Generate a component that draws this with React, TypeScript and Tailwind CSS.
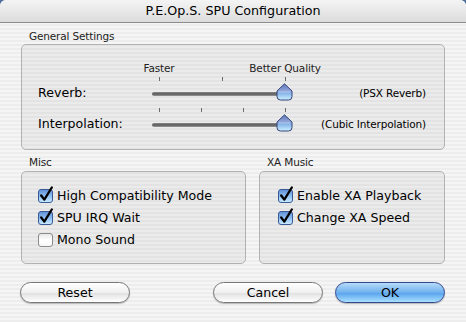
const STRIPES =
  "bg-[repeating-linear-gradient(0deg,#ededed_0px,#ededed_2px,#f5f5f5_2px,#f5f5f5_4px)]";

function Thumb() {
  return (
    <svg width="17" height="18" viewBox="0 0 17 18" className="absolute left-[124px] top-[6px]">
      <defs>
        <linearGradient id="tg" x1="0" y1="0" x2="0" y2="1">
          <stop offset="0" stopColor="#5f77b8" />
          <stop offset="0.5" stopColor="#97acdf" />
          <stop offset="0.55" stopColor="#7fb0e6" />
          <stop offset="1" stopColor="#cdf0ff" />
        </linearGradient>
      </defs>
      <path
        d="M8.5 0.8 L16 8 V13.5 Q16 17 12.5 17 H4.5 Q1 17 1 13.5 V8 Z"
        fill="url(#tg)"
        stroke="#34457a"
        strokeWidth="1"
      />
      <path d="M3 9 H14" stroke="#ffffff" strokeOpacity="0.35" />
    </svg>
  );
}

function Slider({ ticks }: { ticks: number[] }) {
  return (
    <div className="relative h-[24px] w-[142px]">
      {ticks.map((t) => (
        <span key={t} className="absolute top-0 h-[4px] w-px bg-[#6b6b6b]" style={{ left: t }} />
      ))}
      <div className="absolute left-0 top-[15px] h-[4px] w-[136px] rounded-full bg-[linear-gradient(#8a8a8a,#5a5a5a_50%,#9a9a9a)]" />
      <Thumb />
    </div>
  );
}

function Checkbox({ label, checked }: { label: string; checked?: boolean }) {
  return (
    <div className="flex h-[22px] items-center">
      <svg width="17" height="17" viewBox="0 0 17 17" className="-mt-[3px] mr-[2px]">
        <defs>
          <linearGradient id="cb" x1="0" y1="0" x2="0" y2="1">
            <stop offset="0" stopColor="#5f8fd6" />
            <stop offset="0.5" stopColor="#8dbdf2" />
            <stop offset="1" stopColor="#cdeeff" />
          </linearGradient>
          <linearGradient id="cw" x1="0" y1="0" x2="0" y2="1">
            <stop offset="0" stopColor="#e6e6e6" />
            <stop offset="0.5" stopColor="#ffffff" />
            <stop offset="1" stopColor="#f6f6f6" />
          </linearGradient>
        </defs>
        <rect
          x="0.5"
          y="3.5"
          width="14"
          height="13"
          rx="2.5"
          fill={checked ? "url(#cb)" : "url(#cw)"}
          stroke={checked ? "#3a5a96" : "#8a8a8a"}
        />
        {checked && (
          <path
            d="M3.2 9.5 L6.3 13.6 L13.8 1.5"
            fill="none"
            stroke="#000"
            strokeWidth="2.3"
            strokeLinecap="round"
            strokeLinejoin="round"
          />
        )}
      </svg>
      <span className="text-[12.6px] leading-[16px] text-black">{label}</span>
    </div>
  );
}

function AquaButton({ label, primary }: { label: string; primary?: boolean }) {
  return (
    <button
      type="button"
      className={`h-[21px] w-[110px] rounded-full border text-[12.6px] leading-[19px] text-black shadow-[0_1px_1px_rgba(0,0,0,0.25)] ${
        primary
          ? "border-[#34488f] bg-[linear-gradient(#b6dcfa,#6fb0ee_50%,#5ba6ef_55%,#a9e0ff)]"
          : "border-[#777777] bg-[linear-gradient(#ffffff,#f0f0f0_50%,#e2e2e2_55%,#ffffff)]"
      }`}
    >
      {label}
    </button>
  );
}

function GroupLabel({ children }: { children: string }) {
  return (
    <div className="ml-[8px] h-[13px] text-[10.5px] leading-[13px] tracking-[-0.15px] text-[#222]">
      {children}
    </div>
  );
}

export default function App() {
  return (
    <div className="h-[322px] w-[466px] bg-[#4f6f9c]" style={{ fontFamily: '"DejaVu Sans", sans-serif' }}>
      <div className={`flex h-full w-full flex-col overflow-hidden rounded-t-[6px] ${STRIPES}`}>
        <div className="flex h-[23px] shrink-0 items-center justify-center border-b border-[#8c8c8c] bg-[linear-gradient(#f4f4f4,#dcdcdc)] text-[12.7px] text-black">
          P.E.Op.S. SPU Configuration
        </div>

        <div className="flex flex-col px-[21px]">
          <div className="mt-[7px]">
            <GroupLabel>General Settings</GroupLabel>
          </div>
          <div className="mt-[1px] h-[106px] rounded-[5px] border border-[#b2b2b2] bg-black/[0.04] pl-[16px] pr-[18px] pt-[17px]">
            <div className="flex">
              <div className="w-[114px]" />
              <div className="relative h-[13px] w-[142px] text-[10.5px] leading-[13px] tracking-[-0.15px] text-[#222]">
                <span className="absolute left-[7px] -translate-x-1/2">Faster</span>
                <span className="absolute left-[133px] -translate-x-1/2 whitespace-nowrap">Better Quality</span>
              </div>
            </div>
            <div className="mt-[2px] flex items-start">
              <div className="mt-[8px] w-[114px] text-[12.6px] leading-[16px]">Reverb:</div>
              <Slider ticks={[7, 70, 133]} />
              <div className="mt-[8px] flex-1 text-right text-[10.5px] leading-[16px] tracking-[-0.15px]">
                (PSX Reverb)
              </div>
            </div>
            <div className="mt-[7px] flex items-start">
              <div className="mt-[8px] w-[114px] text-[12.6px] leading-[16px]">Interpolation:</div>
              <Slider ticks={[7, 49, 91, 133]} />
              <div className="mt-[8px] flex-1 text-right text-[10.5px] leading-[16px] tracking-[-0.15px]">
                (Cubic Interpolation)
              </div>
            </div>
          </div>

          <div className="mt-[6px] flex gap-[13px]">
            <div className="flex w-[225px] flex-col">
              <GroupLabel>Misc</GroupLabel>
              <div className="mt-[2px] h-[93px] rounded-[5px] border border-[#b2b2b2] bg-black/[0.04] pl-[16px] pt-[13px]">
                <Checkbox label="High Compatibility Mode" checked />
                <Checkbox label="SPU IRQ Wait" checked />
                <Checkbox label="Mono Sound" />
              </div>
            </div>
            <div className="flex flex-1 flex-col">
              <GroupLabel>XA Music</GroupLabel>
              <div className="mt-[2px] h-[93px] rounded-[5px] border border-[#b2b2b2] bg-black/[0.04] pl-[18px] pt-[13px]">
                <Checkbox label="Enable XA Playback" checked />
                <Checkbox label="Change XA Speed" checked />
              </div>
            </div>
          </div>

          <div className="mt-[16px] flex items-center">
            <div className="ml-[-1px]">
              <AquaButton label="Reset" />
            </div>
            <div className="flex-1" />
            <div className="flex gap-[12px]">
              <AquaButton label="Cancel" />
              <AquaButton label="OK" primary />
            </div>
          </div>
        </div>
      </div>
    </div>
  );
}
